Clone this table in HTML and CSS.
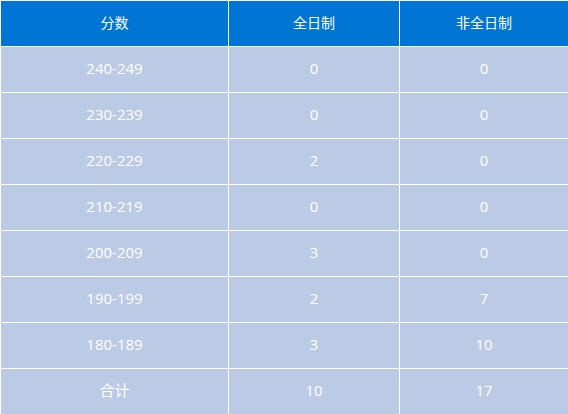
FILE: index.html
```html
<!DOCTYPE html>
<html>
<head>
<meta charset="utf-8">
<link rel="stylesheet" href="styles.css">
</head>
<body>
<table class="score-table">
  <colgroup>
    <col class="c1"><col class="c2"><col class="c3">
  </colgroup>
  <thead>
    <tr><th>分数</th><th>全日制</th><th>非全日制</th></tr>
  </thead>
  <tbody>
    <tr><td>240-249</td><td>0</td><td>0</td></tr>
    <tr><td>230-239</td><td>0</td><td>0</td></tr>
    <tr><td>220-229</td><td>2</td><td>0</td></tr>
    <tr><td>210-219</td><td>0</td><td>0</td></tr>
    <tr><td>200-209</td><td>3</td><td>0</td></tr>
    <tr><td>190-199</td><td>2</td><td>7</td></tr>
    <tr><td>180-189</td><td>3</td><td>10</td></tr>
    <tr><td>合计</td><td>10</td><td>17</td></tr>
  </tbody>
</table>
</body>
</html>
```
FILE: styles.css
```css
html, body {
  margin: 0;
  padding: 0;
  background: #ffffff;
}
.score-table {
  border-collapse: collapse;
  table-layout: fixed;
  width: 568px;
  font-family: "Open Sans", "Noto Sans CJK SC", sans-serif;
  font-size: 15px;
  line-height: 20px;
  color: #ffffff;
}
.c1 { width: 228px; }
.c2 { width: 171px; }
.c3 { width: 169px; }
.score-table th,
.score-table td {
  border: 1px solid #ffffff;
  height: 43px;
  padding: 0 0 2px;
  text-align: center;
  vertical-align: middle;
  font-weight: normal;
}
.score-table th {
  background: #0175d3;
  font-size: 14px;
}
.score-table td {
  background: #bbcae5;
  height: 41px;
  padding: 0 0 4px;
}
```
